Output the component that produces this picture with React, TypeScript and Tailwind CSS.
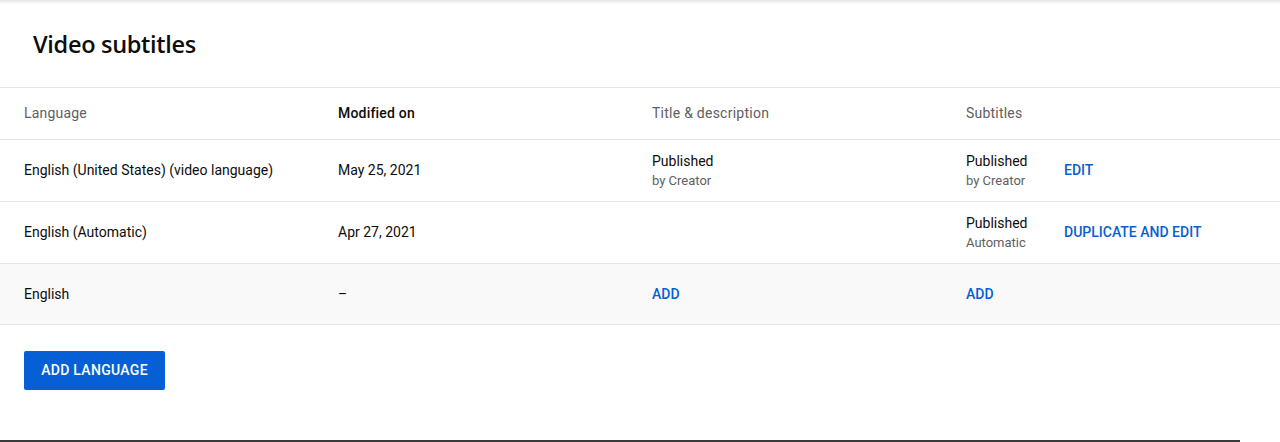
import { Fragment } from 'react';

interface Row {
  language: string;
  modified: string;
  title: { main: string; sub?: string } | 'add' | null;
  subtitles: { main: string; sub?: string } | 'add';
  action?: string;
  shaded?: boolean;
}

const rows: Row[] = [
  {
    language: 'English (United States) (video language)',
    modified: 'May 25, 2021',
    title: { main: 'Published', sub: 'by Creator' },
    subtitles: { main: 'Published', sub: 'by Creator' },
    action: 'EDIT',
  },
  {
    language: 'English (Automatic)',
    modified: 'Apr 27, 2021',
    title: null,
    subtitles: { main: 'Published', sub: 'Automatic' },
    action: 'DUPLICATE AND EDIT',
  },
  {
    language: 'English',
    modified: '–',
    title: 'add',
    subtitles: 'add',
    shaded: true,
  },
];

function Status({ value }: { value: Row['title'] }) {
  if (value === null) return null;
  if (value === 'add') {
    return <span className="text-[14px] font-medium text-[#065fd4]">ADD</span>;
  }
  return (
    <div className="flex flex-col">
      <span className="text-[14px] leading-[20px] text-[#0d0d0d]">{value.main}</span>
      <span className="text-[13px] leading-[20px] text-[#606060]">{value.sub}</span>
    </div>
  );
}

export default function App() {
  return (
    <div className="relative h-[442px] w-[1280px] overflow-hidden bg-white font-['Roboto',sans-serif] text-[#0d0d0d]">
      <div className="h-[4px] w-full bg-gradient-to-b from-[#e4e4e4] to-white" />
      <header className="flex h-[84px] items-center border-b border-[#e5e5e5] pl-[33px] pb-[2px]">
        <h1 className="font-['Open_Sans',sans-serif] text-[23.5px] font-semibold tracking-[-0.3px] text-[#0d0d0d]">
          Video subtitles
        </h1>
      </header>

      <div className="grid grid-cols-[314px_314px_314px_98px_1fr] pl-[24px] text-[14px]">
        <div className="flex h-[52px] items-center border-b border-[#e5e5e5] -ml-[24px] pl-[24px] tracking-[0.2px] text-[#606060]">Language</div>
        <div className="flex h-[52px] items-center border-b border-[#e5e5e5] tracking-[0.2px] font-medium text-[#0d0d0d]">Modified on</div>
        <div className="flex h-[52px] items-center border-b border-[#e5e5e5] tracking-[0.25px] text-[#606060]">Title &amp; description</div>
        <div className="flex h-[52px] items-center border-b border-[#e5e5e5] tracking-[0.2px] text-[#606060]">Subtitles</div>
        <div className="h-[52px] border-b border-[#e5e5e5]" />

        {rows.map((r) => {
          const cell = `flex items-center border-b border-[#e5e5e5] ${r.shaded ? 'h-[61px] bg-[#f9f9f9]' : 'h-[62px]'}`;
          return (
            <Fragment key={r.language}>
              <div className={`${cell} -ml-[24px] pl-[24px]`}>{r.language}</div>
              <div className={cell}>{r.modified}</div>
              <div className={cell}>
                <Status value={r.title} />
              </div>
              <div className={cell}>
                <Status value={r.subtitles} />
              </div>
              <div className={cell}>
                {r.action && (
                  <span className="text-[14px] font-medium text-[#065fd4]">{r.action}</span>
                )}
              </div>
            </Fragment>
          );
        })}
      </div>

      <div className="pl-[24px] pt-[26px]">
        <button className="h-[39px] w-[141px] rounded-[2px] bg-[#065fd4] text-[14px] font-medium tracking-[0.3px] text-white">
          ADD LANGUAGE
        </button>
      </div>

      <div className="absolute bottom-0 left-0 h-[2px] w-[1240px] bg-[#3a3a3a]" />
    </div>
  );
}
